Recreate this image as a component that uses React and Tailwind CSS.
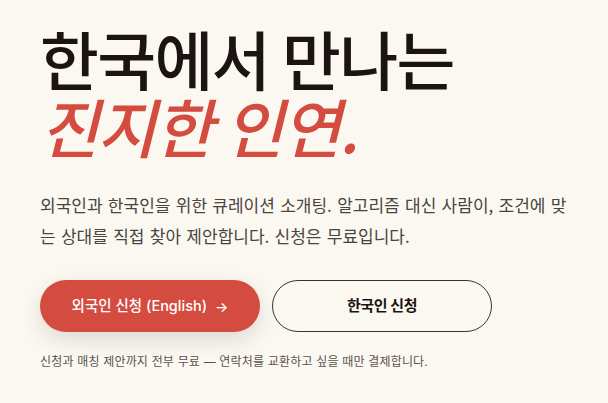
import React from 'react'

const SANS = "font-['Inter','Noto_Sans_CJK_KR',sans-serif]"

export default function App() {
  return (
    <div className={`min-h-screen w-full bg-[#fbf8f2] ${SANS}`}>
      <section className="px-10 pt-[23px]">
        {/* Headline */}
        <h1 className="font-['Noto_Sans_CJK_KR',sans-serif] text-[64px] font-medium leading-[68px] tracking-[-0.025em] text-[#1b1412]">
          한국에서 만나는
          <br />
          <em className="italic text-[#d44c40]">진지한 인연.</em>
        </h1>

        {/* Intro copy */}
        <p className="mt-[30px] max-w-[536px] font-['Noto_Sans_CJK_KR',sans-serif] text-[17px] leading-[31px] text-[#4a4440] [word-spacing:1.5px]">
          외국인과 한국인을 위한 큐레이션 소개팅. 알고리즘 대신 사람이, 조건에 맞는 상대를 직접 찾아 제안합니다. 신청은 무료입니다.
        </p>

        {/* Actions */}
        <div className="mt-[29px] flex gap-3">
          <button className="flex h-[52px] w-[220px] items-center justify-center gap-2 rounded-full bg-[#d44c40] text-[14.5px] font-medium text-white shadow-[0_8px_22px_rgba(60,30,20,0.14)]">
            외국인 신청 (English)
            <span className="text-[14px]">→</span>
          </button>
          <button className="flex h-[52px] w-[220px] items-center justify-center rounded-full border border-[#3a3330] text-[15px] font-semibold tracking-[-0.03em] text-[#1b1412]">
            한국인 신청
          </button>
        </div>

        <p className="mt-[22px] text-xs tracking-[0.015em] text-[#5a524e]">
          신청과 매칭 제안까지 전부 무료 — 연락처를 교환하고 싶을 때만 결제합니다.
        </p>
      </section>
    </div>
  )
}
